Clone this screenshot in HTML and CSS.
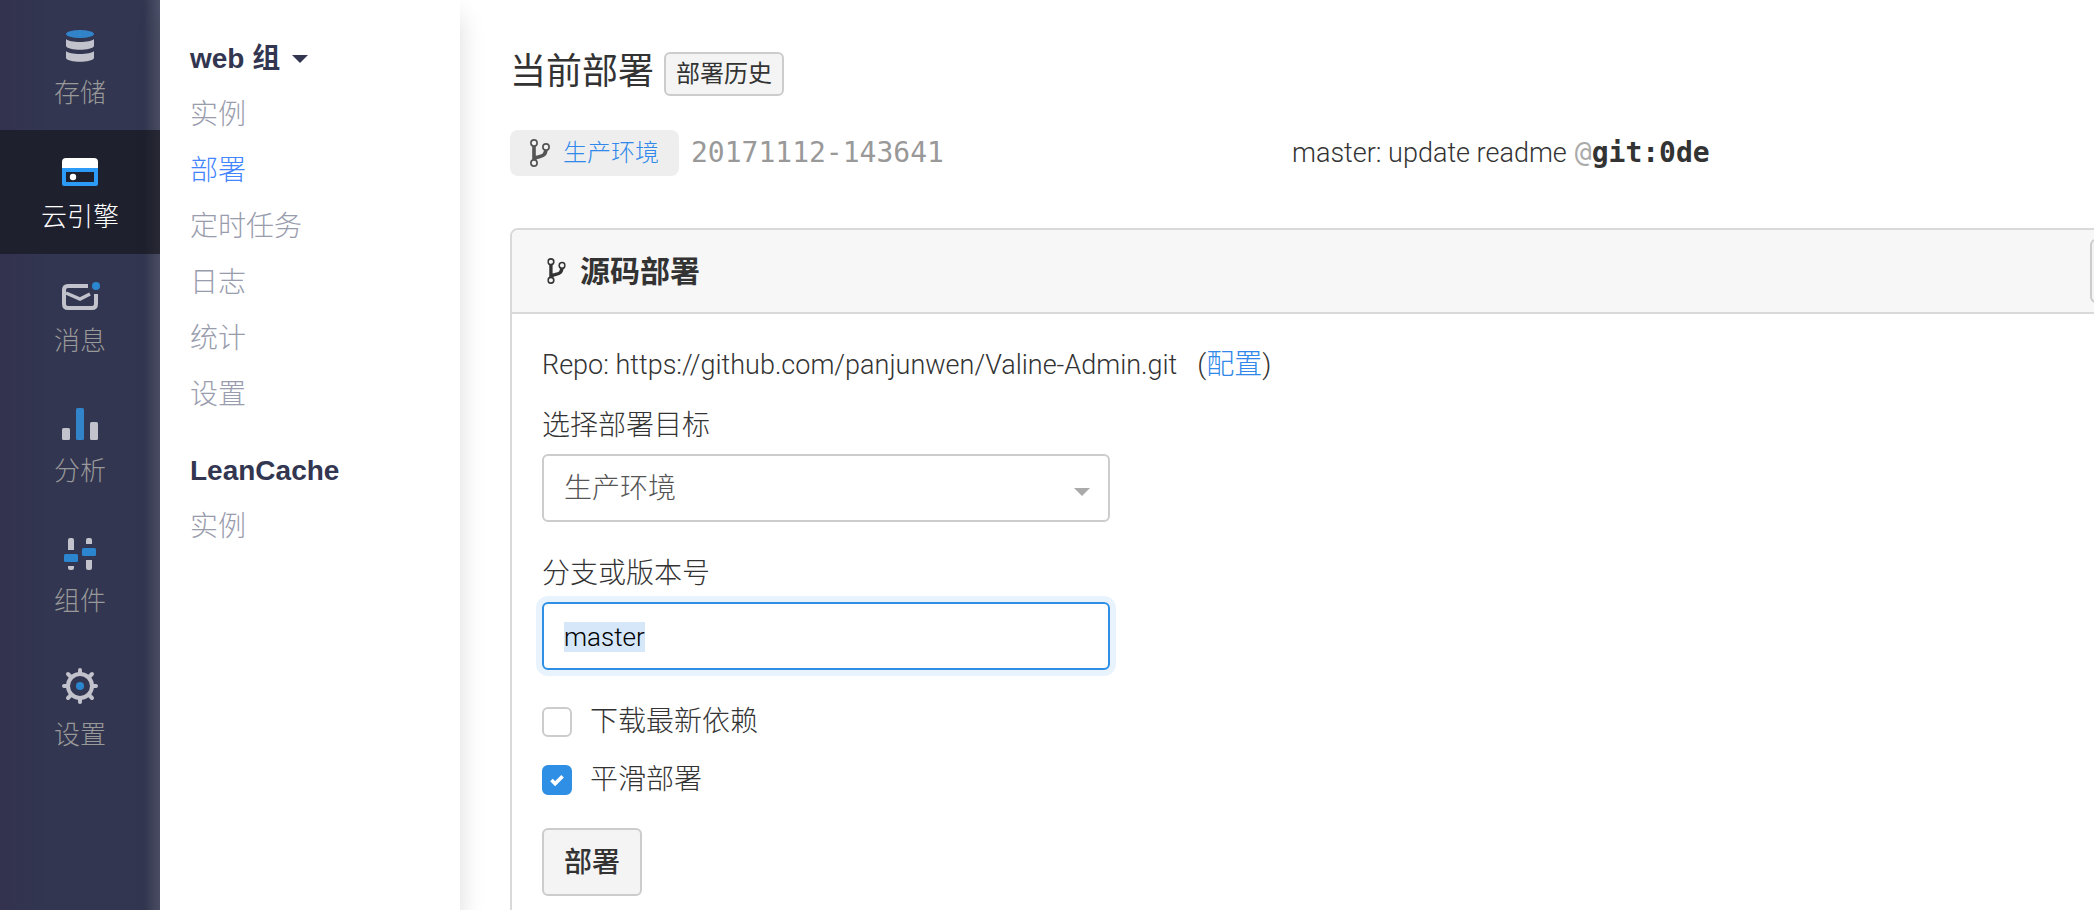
FILE: index.html
```html
<!DOCTYPE html>
<html lang="zh-CN">
<head>
<meta charset="utf-8">
<title>云引擎 - 部署</title>
<link rel="stylesheet" href="styles.css">
</head>
<body>
<svg class="defs" aria-hidden="true">
  <symbol id="branch" viewBox="0 0 20 28">
    <path d="M4 5V23M16 9C16 17 12 17 8 18C5.500 18.500 4 20 4 22" fill="none" stroke="currentColor" stroke-width="3.600"/>
    <g class="branch-node" stroke="currentColor" stroke-width="1.700">
      <circle cx="4" cy="4" r="3.100"/><circle cx="16" cy="8" r="3.100"/><circle cx="4" cy="24" r="3.100"/>
    </g>
  </symbol>
</svg>
<div class="app">
  <nav class="rail">
    <a class="rail-item" href="#storage">
      <svg width="28" height="34" viewBox="0 0 28 34"><ellipse cx="14" cy="6" rx="14" ry="4" fill="#3183ca"/><path d="M0 11c3 4 25 4 28 0v7c-2 5-26 5-28 0zM0 23c3 4 25 4 28 0v7c-2 5-26 5-28 0z" fill="#c2c2cc"/></svg>
      <span>存储</span>
    </a>
    <a class="rail-item active" href="#engine">
      <svg width="36" height="28" viewBox="0 0 36 28"><path d="M0 10V4q0-4 4-4h28q4 0 4 4v6z" fill="#fff"/><path d="M0 10h36v16q0 2-2 2H2q-2 0-2-2z" fill="#2c9bf8"/><path d="M4 14h28v10H4z" fill="#1f202e"/><circle cx="11" cy="19" r="3.200" fill="#fff"/></svg>
      <span>云引擎</span>
    </a>
    <a class="rail-item" href="#message">
      <svg width="36" height="28" viewBox="0 0 36 28"><path d="M26 4H6Q2 4 2 8v14q0 4 4 4h24q4 0 4-4V12" fill="none" stroke="#c2c2cc" stroke-width="4"/><path d="M4 11l14 6 10-5" fill="none" stroke="#c2c2cc" stroke-width="3.500"/><circle cx="34" cy="4" r="4" fill="#2b86cf"/></svg>
      <span>消息</span>
    </a>
    <a class="rail-item" href="#analysis">
      <svg width="36" height="34" viewBox="0 0 36 34"><rect y="22" width="8" height="12" rx="1.500" fill="#c2c2cc"/><rect x="14" y="2" width="8" height="32" rx="1.500" fill="#3183ca"/><rect x="28" y="16" width="8" height="18" rx="1.500" fill="#c2c2cc"/></svg>
      <span>分析</span>
    </a>
    <a class="rail-item" href="#components">
      <svg width="32" height="34" viewBox="0 0 32 34"><g fill="#c2c2cc"><path d="M4 14V4q0-2 2-2h2q2 0 2 2v10zM4 30h6v2q0 2-2 2H6q-2 0-2-2zM22 8V4q0-2 2-2h2q2 0 2 2v4zM22 24h6v8q0 2-2 2h-2q-2 0-2-2z"/></g><g fill="#2b86cf"><rect y="18" width="14" height="8" rx="1.500"/><rect x="18" y="12" width="14" height="8" rx="1.500"/></g></svg>
      <span>组件</span>
    </a>
    <a class="rail-item" href="#settings">
      <svg width="36" height="38" viewBox="0 0 36 38"><g transform="translate(18 20)"><circle r="12" fill="none" stroke="#c2c2cc" stroke-width="4"/><path d="M0-13V-16M0 13V16M-13 0H-16M13 0H16M9.500-9.500L12-12M-9.500-9.500L-12-12M9.500 9.500L12 12M-9.500 9.500L-12 12" stroke="#c2c2cc" stroke-width="4" stroke-linecap="round"/><circle r="4" fill="#2b86cf"/></g></svg>
      <span>设置</span>
    </a>
  </nav>

  <aside class="side">
    <section class="side-group">
      <button class="side-title" type="button">web 组 <span class="caret"></span></button>
      <a class="side-link" href="#instances">实例</a>
      <a class="side-link current" href="#deploy">部署</a>
      <a class="side-link" href="#cron">定时任务</a>
      <a class="side-link" href="#logs">日志</a>
      <a class="side-link" href="#stats">统计</a>
      <a class="side-link" href="#config">设置</a>
    </section>
    <section class="side-group">
      <h2 class="side-title">LeanCache</h2>
      <a class="side-link" href="#cache">实例</a>
    </section>
  </aside>

  <main class="main">
    <header class="page-head">
      <h1 class="page-title">当前部署</h1>
      <button class="btn btn-small" type="button">部署历史</button>
    </header>
    <div class="status">
      <div class="status-col">
        <span class="badge"><svg class="branch" width="20" height="28"><use href="#branch"/></svg><a class="link" href="#production">生产环境</a></span>
        <span class="version">20171112-143641</span>
      </div>
      <div class="status-col">
        <span class="message">master: update readme</span>
        <span class="commit"><span class="at">@</span><b>git:0de</b></span>
      </div>
    </div>

    <section class="card">
      <header class="card-head">
        <svg class="branch" width="19" height="26" viewBox="0 0 20 28"><use href="#branch"/></svg>
        <h2 class="card-title">源码部署</h2>
        <button class="btn card-action" type="button" aria-label="更多"></button>
      </header>
      <form class="card-body">
        <p class="repo"><span class="message">Repo: https://github.com/panjunwen/Valine-Admin.git</span> <span>(<a class="link" href="#repo">配置</a>)</span></p>
        <label class="label" for="target">选择部署目标</label>
        <div class="select">
          <select class="field" id="target"><option>生产环境</option></select>
        </div>
        <label class="label" for="revision">分支或版本号</label>
        <input class="field" id="revision" type="text" value="master" autofocus>
        <label class="check"><input type="checkbox">下载最新依赖</label>
        <label class="check"><input type="checkbox" checked>平滑部署</label>
        <button class="btn btn-large" type="button">部署</button>
      </form>
    </section>
  </main>
</div>
<script src="app.js"></script>
</body>
</html>
```
FILE: app.js
```js
const revision = document.getElementById("revision");
revision.focus();
revision.select();
```
FILE: styles.css
```css
* { box-sizing: border-box; }
body {
  margin: 0;
  background: #fff;
  color: #333;
  font-family: Roboto, "Noto Sans CJK SC", sans-serif;
  font-size: 28px;
  font-weight: 300;
  line-height: 40px;
}
h1, h2, p { margin: 0; }
a { text-decoration: none; }
button, input, select { font: inherit; color: inherit; }
.defs { position: absolute; width: 0; height: 0; }
.app { display: flex; height: 100vh; overflow: hidden; }

.rail {
  flex: none;
  width: 160px;
  background:
    linear-gradient(to right, transparent 90%, rgba(255, 255, 255, .14)),
    linear-gradient(to right, #33324f, #323650 30%);
}
.rail-item {
  display: flex;
  flex-direction: column;
  align-items: center;
  gap: 9px;
  padding: 28px 0 15px;
  color: #999;
  font-size: 26px;
  line-height: 44px;
}
.rail-item svg { overflow: visible; }
.rail-item.active {
  background: linear-gradient(to right, #1f202e 90%, #2b2c38);
  color: #fff;
}

.side {
  flex: none;
  width: 300px;
  padding: 31px 30px 0;
  background: #fff;
  box-shadow: 0 16px 24px rgba(0, 0, 0, .14);
}
.side-group { display: flex; flex-direction: column; align-items: flex-start; margin-bottom: 20px; }
.side-title, .side-link { line-height: 56px; }
.side-title {
  display: flex;
  align-items: center;
  gap: 12px;
  padding: 0;
  border: 0;
  background: none;
  color: #323650;
  font-family: "Liberation Sans", "Noto Sans CJK SC", sans-serif;
  font-size: 28px;
  font-weight: 700;
}
.caret { border: 8px solid transparent; border-top-color: currentColor; border-bottom: 0; }
.side-link { color: #999cad; }
.side-link.current { color: #4285ff; }

.main { flex: 1; min-width: 0; padding: 48px 0 0 50px; overflow: hidden; }
.page-head { display: flex; align-items: flex-end; gap: 10px; }
.page-title { font-size: 36px; font-weight: 400; line-height: 48px; }
.btn {
  border: 2px solid #ccc;
  border-radius: 6px;
  background: #f4f4f4;
  color: #333;
}
.btn-small { height: 44px; padding: 0 10px; font-size: 24px; font-weight: 400; line-height: 36px; }

.status { display: grid; grid-template-columns: 1fr 1fr; margin: 34px 20px 52px 0; }
.status-col { display: flex; align-items: center; gap: 8px; }
.badge {
  display: flex;
  align-items: center;
  gap: 13px;
  height: 46px;
  margin-right: 4px;
  padding: 0 20px;
  border-radius: 8px;
  background: #eee;
  color: #555;
  font-size: 24px;
}
.branch { flex: none; }
.branch-node { fill: #f4f4f4; }
.link { color: #2f88ea; }
.message { font-size: 27px; }
.version, .commit { font-family: "DejaVu Sans Mono", monospace; font-weight: 400; }
.version { color: #999; }
.at { color: #aaa; }

.card {
  margin-right: -90px;
  border: 2px solid #d9d9d9;
  border-radius: 8px;
}
.card-head {
  display: flex;
  align-items: center;
  gap: 14px;
  height: 84px;
  padding: 0 30px 0 35px;
  border-bottom: 2px solid #d9d9d9;
  border-radius: 6px 6px 0 0;
  background: #f7f7f7;
}
.card-title { padding-top: 2px; font-size: 30px; font-weight: 700; }
.card-action { width: 62px; height: 64px; margin-left: auto; }
.card-body {
  display: flex;
  flex-direction: column;
  align-items: flex-start;
  padding: 31px 30px;
}
.repo { display: flex; gap: 20px; margin-bottom: 21px; }
.label { margin-bottom: 8px; }
.field {
  display: block;
  width: 568px;
  height: 68px;
  margin-bottom: 32px;
  padding: 2px 20px 0;
  border: 2px solid #ccc;
  border-radius: 6px;
  background: #fff;
  appearance: none;
}
input.field { font-size: 26px; }
.field:focus { border-color: #2f8fe4; outline: none; box-shadow: 0 0 0 6px #e8f3fd; color: #000; }
.field::selection { background: #d5e7f8; color: #000; }
.select { position: relative; }
.select .field { color: #555; }
.select::after {
  content: "";
  position: absolute;
  top: 34px;
  right: 20px;
  border: 8px solid transparent;
  border-top-color: #aaa;
  border-bottom: 0;
  pointer-events: none;
}
.check { display: flex; align-items: center; gap: 18px; margin-bottom: 18px; }
.check input {
  width: 30px;
  height: 30px;
  margin: 0;
  border: 2px solid #ccc;
  border-radius: 6px;
  background: #fff;
  appearance: none;
}
.check input:checked {
  border-color: #2f8fe4;
  background: #2f8fe4 url("data:image/svg+xml,%3Csvg xmlns='http://www.w3.org/2000/svg' viewBox='0 0 26 26'%3E%3Cpath d='M7 13l4 4 8-8' fill='none' stroke='white' stroke-width='4'/%3E%3C/svg%3E") center / 24px no-repeat;
}
.btn-large { height: 68px; margin-top: 10px; padding: 2px 20px 0; font-weight: 500; }
```
